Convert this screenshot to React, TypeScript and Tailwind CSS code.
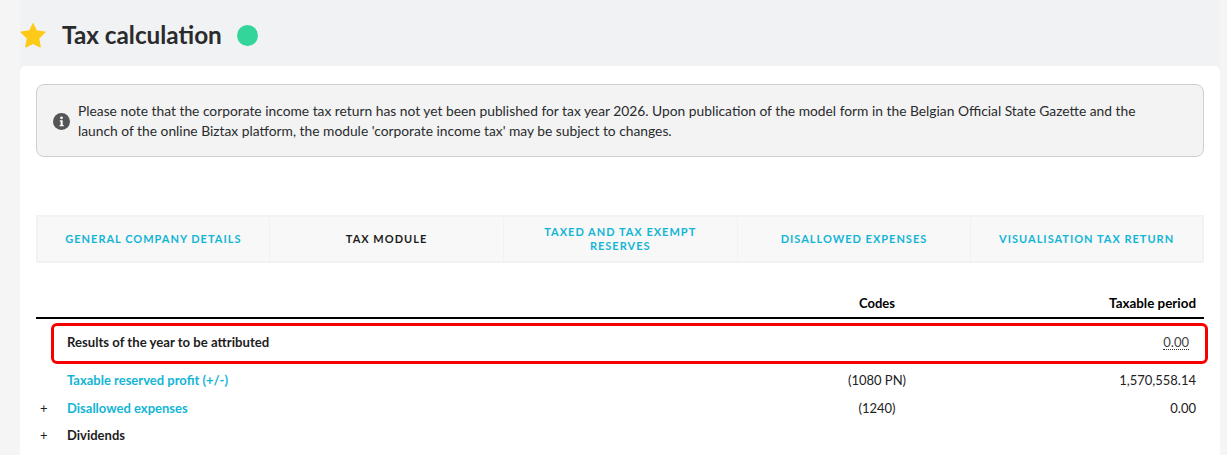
import React from "react";

const tabs = [
  { label: "GENERAL COMPANY DETAILS", active: false },
  { label: "TAX MODULE", active: true },
  { label: "TAXED AND TAX EXEMPT RESERVES", active: false },
  { label: "DISALLOWED EXPENSES", active: false },
  { label: "VISUALISATION TAX RETURN", active: false },
];

function Row({ sign, label, link, code, value, className }: { sign?: string; label: string; link?: boolean; code?: string; value?: string; className: string }) {
  return (
    <div className={`flex items-center text-[13px] text-[#222] ${className}`}>
      <div className="w-[31px] pl-[4px] text-[13px]">{sign}</div>
      <div className={`flex-1 font-bold ${link ? "text-[#13b5d6]" : "text-[#1d1d1d]"}`}>{label}</div>
      <div className="w-[120px] text-center">{code}</div>
      <div className="w-[267px] pr-2 text-right">{value}</div>
    </div>
  );
}

export default function App() {
  return (
    <div className="h-[455px] w-[1227px] overflow-hidden bg-[#f5f5f5] font-['Lato',sans-serif]">
      <div className="ml-[20px] h-[455px] w-[1200px] bg-[#f1f2f4]">
        <header className="flex h-[66px] items-center pt-[4px]">
          <svg width="26" height="26" viewBox="0 0 26 26" className="mt-[-1px] shrink-0">
            <path
              d="M13 .6l3.7 7.7 8.4 1.1c.5.1.7.7.3 1.1l-6.1 5.9 1.5 8.4c.1.5-.4.9-.9.6L13 21.9l-6.9 3.5c-.5.3-1-.1-.9-.6l1.5-8.4-6.1-5.9c-.4-.4-.2-1 .3-1.1l8.4-1.1z"
              fill="#fdcb17"
            />
          </svg>
          <h1 className="ml-[16px] text-[24.3px] font-bold leading-none text-[#292b2c]">Tax calculation</h1>
          <span className="ml-[15px] h-[21px] w-[21px] rounded-full bg-[#34d59b]" />
        </header>
        <main className="h-[389px] rounded-t-[6px] bg-white px-[16px] pt-[18px]">
          <div className="flex h-[73px] items-center rounded-[8px] border border-[#cfcfcf] bg-[#f3f3f4] pl-[16px] pr-[40px]">
            <svg width="17" height="17" viewBox="0 0 17 17" className="mt-[2px] shrink-0">
              <circle cx="8.5" cy="8.5" r="8.5" fill="#555" />
              <circle cx="8.5" cy="4.8" r="1.4" fill="#fff" />
              <path d="M6.8 7.2h2.9v4.7h1v1.4H6.6v-1.4h1V8.6h-.8z" fill="#fff" />
            </svg>
            <p className="ml-[8px] text-[13.8px] leading-[20px] text-[#292b2c]">
              Please note that the corporate income tax return has not yet been published for tax year 2026. Upon publication of the model form in the Belgian Official State Gazette and the launch of the online Biztax platform, the module 'corporate income tax' may be subject to changes.
            </p>
          </div>
          <nav className="ml-[-0.5px] mt-[58px] grid h-[48px] grid-cols-5 border-y-2 border-[#f2f2f2] bg-[#f8f8f8]">
            {tabs.map((t, i) => (
              <div
                key={t.label}
                className={`flex items-center justify-center border-[#f2f2f2] px-[20px] text-center text-[11px] font-bold leading-[14px] tracking-[1px] ${t.active ? "text-[#1d1d1d]" : "text-[#13b5d6]"} ${i === 0 ? "border-l-2" : "border-l"} ${i === 4 ? "border-r-2" : ""}`}
              >
                {t.label}
              </div>
            ))}
          </nav>
          <div className="mt-[32px] flex h-[24px] items-start border-b-2 border-black text-[13px] font-bold text-black">
            <div className="flex-1" />
            <div className="w-[120px] text-center leading-[16px]">Codes</div>
            <div className="w-[267px] pr-2 text-right text-[13.4px] leading-[16px]">Taxable period</div>
          </div>
          <div className="ml-[15px] mr-[-4px] mt-[4px] flex h-[41px] items-center justify-between rounded-[6px] border-[3px] border-[#f60000] pb-[2px] pl-[13px] pr-[16px] text-[13px]">
            <span className="text-[13.15px] font-bold text-[#1d1d1d]">Results of the year to be attributed</span>
            <span className="border-b border-dotted border-[#333] leading-[14px] text-[#444]">0.00</span>
          </div>
          <Row label="Taxable reserved profit (+/-)" link code="(1080 PN)" value="1,570,558.14" className="mt-[7px] h-[20px]" />
          <Row sign="+" label="Disallowed expenses" link code="(1240)" value="0.00" className="mt-[8px] h-[20px]" />
          <Row sign="+" label="Dividends" className="mt-[7px] h-[20px]" />
        </main>
      </div>
    </div>
  );
}
